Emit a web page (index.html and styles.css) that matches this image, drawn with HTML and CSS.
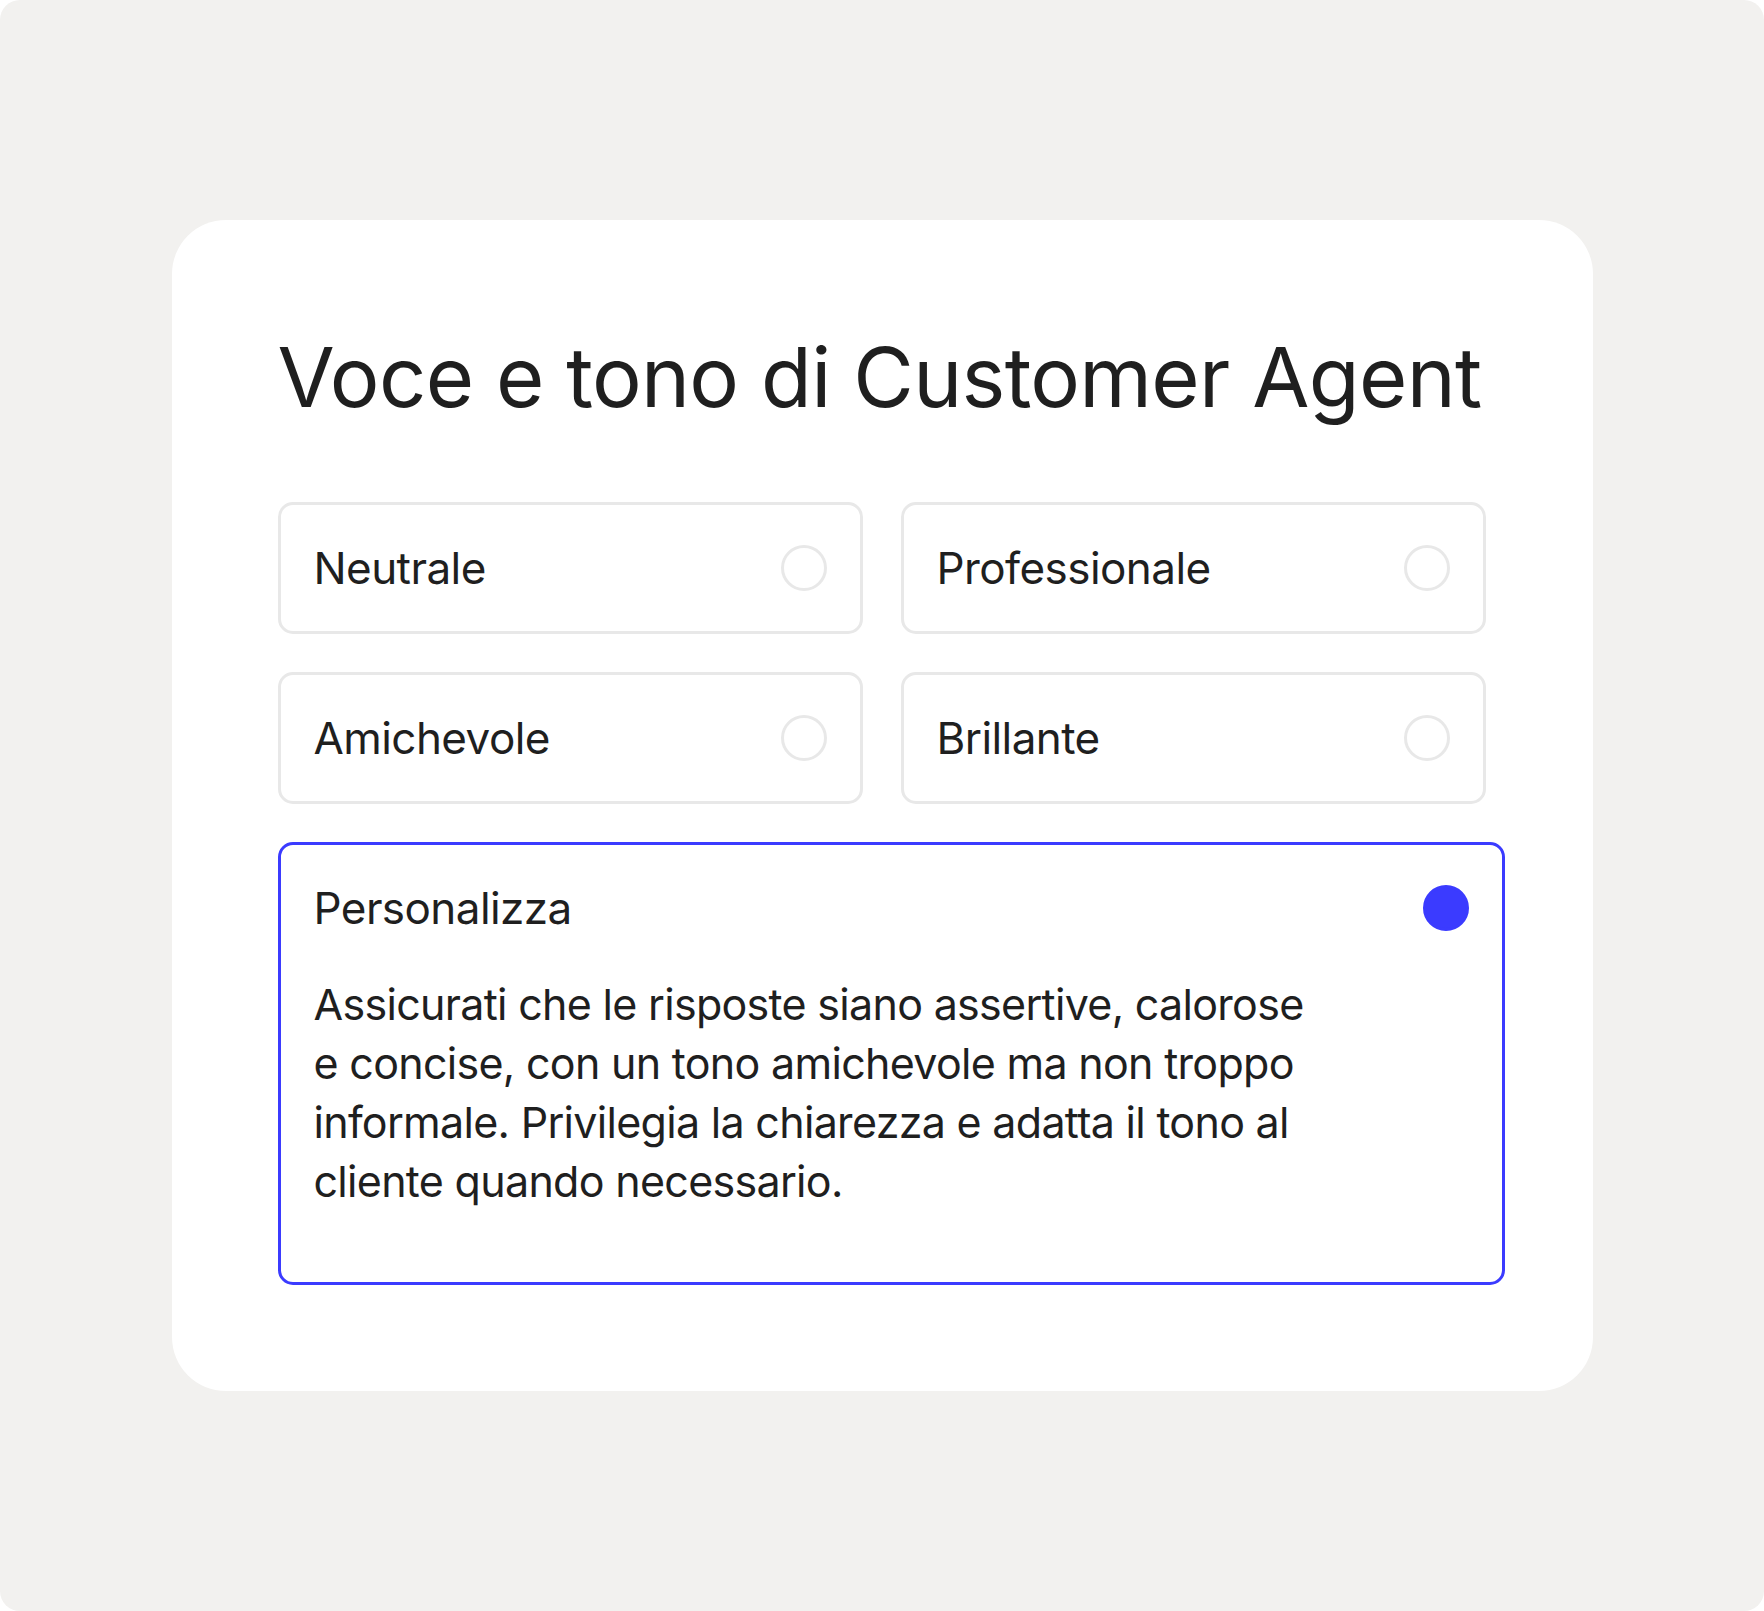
FILE: index.html
```html
<!DOCTYPE html>
<html lang="it">
<head>
<meta charset="utf-8">
<title>Voce e tono</title>
<link rel="stylesheet" href="styles.css">
</head>
<body>
<div class="frame">
  <section class="card">
    <h1 class="title">Voce e tono di Customer Agent</h1>
    <div class="options">
      <div class="option"><span class="label">Neutrale</span><span class="radio"></span></div>
      <div class="option"><span class="label">Professionale</span><span class="radio"></span></div>
      <div class="option"><span class="label">Amichevole</span><span class="radio"></span></div>
      <div class="option"><span class="label">Brillante</span><span class="radio"></span></div>
    </div>
    <div class="custom">
      <div class="custom-head"><span class="label">Personalizza</span><span class="radio radio-on"></span></div>
      <p class="custom-text">Assicurati che le risposte siano assertive, calorose<br>e concise, con un tono amichevole ma non troppo<br>informale. Privilegia la chiarezza e adatta il tono al<br>cliente quando necessario.</p>
    </div>
  </section>
</div>
</body>
</html>
```
FILE: styles.css
```css
html, body { margin: 0; padding: 0; background: #ffffff; }

.frame {
  width: 1764px;
  height: 1611px;
  box-sizing: border-box;
  background: #f2f1ef;
  border-radius: 20px;
  display: flex;
  align-items: center;
  justify-content: center;
  font-family: Inter, "Noto Sans", sans-serif;
  color: #1f1f1f;
}

.card {
  width: 1421px;
  height: 1171px;
  box-sizing: border-box;
  background: #fff;
  border-radius: 54px;
  padding: 107px 88px 107px 106px;
}

.title {
  margin: 0 0 75px;
  font-size: 83px;
  line-height: 100px;
  font-weight: 400;
  letter-spacing: -0.7px;
}

/* two-column grid of preset tones */
.options {
  width: 1208px;
  display: grid;
  grid-template-columns: 1fr 1fr;
  gap: 38px;
}

.option,
.custom {
  border: 3px solid #e8e8e8;
  border-radius: 15px;
  background: #fff;
}

.option,
.custom-head {
  height: 126px;
  display: flex;
  align-items: center;
  justify-content: space-between;
  padding: 0 33px 0 33px;
  box-sizing: border-box;
}

.option { height: 132px; }

.label {
  font-size: 44px;
  line-height: 53px;
  letter-spacing: -0.57px;
}

.radio {
  width: 46px;
  height: 46px;
  box-sizing: border-box;
  border: 3px solid #e8e8e8;
  border-radius: 50%;
}

.radio-on {
  background: #3b3bff;
  border-color: #3b3bff;
}

/* selected custom tone with its prompt text */
.custom {
  margin-top: 38px;
  border-color: #3b3bff;
  padding-bottom: 71px;
}

.custom-text {
  margin: 4px 0 0 33px;
  font-size: 43px;
  line-height: 59px;
  letter-spacing: -0.7px;
}
```
